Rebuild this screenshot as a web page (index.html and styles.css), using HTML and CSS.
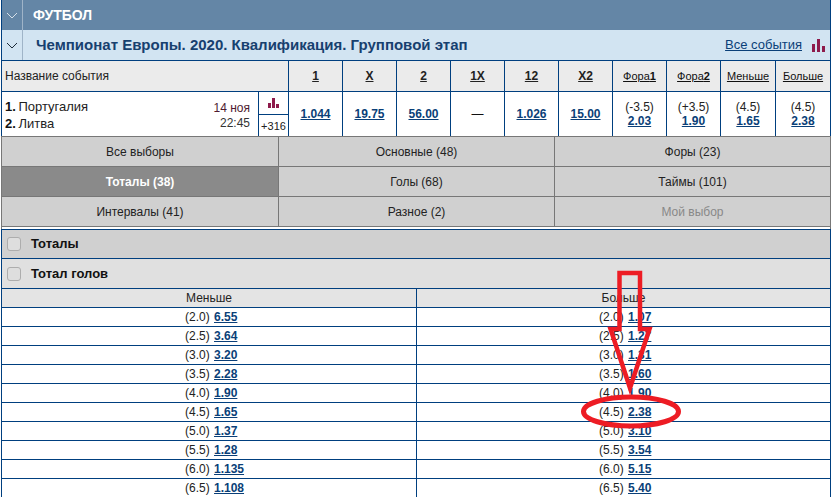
FILE: index.html
```html
<!DOCTYPE html>
<html lang="ru">
<head>
<meta charset="utf-8">
<title>Футбол</title>
<link rel="stylesheet" href="styles.css">
</head>
<body>
<div class="page">
  <div class="bar sport">
    <span class="toggle"><svg width="12" height="7" viewBox="0 0 12 7"><path d="M1 1l5 5 5-5" fill="none" stroke="#d5dfe8" stroke-width="1"/></svg></span>
    <span class="sport-name">ФУТБОЛ</span>
  </div>
  <div class="bar league">
    <span class="toggle"><svg width="12" height="7" viewBox="0 0 12 7"><path d="M1 1l5 5 5-5" fill="none" stroke="#1d2c3a" stroke-width="1"/></svg></span>
    <span class="league-name">Чемпионат Европы. 2020. Квалификация. Групповой этап</span>
    <a class="all-events" href="#">Все события</a>
    <svg class="league-chart" width="13" height="13" viewBox="0 0 13 13"><path d="M0 5h3v8H0zM5 0h3v13H5zM10 7h3v6h-3z" fill="#8e1a4b"/></svg>
  </div>

  <div class="odds-grid head">
    <div class="cell name-head">Название события</div>
    <div class="cell big"><u>1</u></div>
    <div class="cell big"><u>X</u></div>
    <div class="cell big"><u>2</u></div>
    <div class="cell big"><u>1X</u></div>
    <div class="cell big"><u>12</u></div>
    <div class="cell big"><u>X2</u></div>
    <div class="cell small"><u>Фора<b>1</b></u></div>
    <div class="cell small"><u>Фора<b>2</b></u></div>
    <div class="cell small"><u>Меньше</u></div>
    <div class="cell small last"><u>Больше</u></div>
  </div>

  <div class="odds-grid event">
    <div class="cell event-info">
      <div class="teams">
        <div><b>1.</b> Португалия</div>
        <div><b>2.</b> Литва</div>
      </div>
      <div class="when">
        <div class="date">14 ноя</div>
        <div>22:45</div>
      </div>
      <div class="extras">
        <span class="stat"><svg width="11" height="10" viewBox="0 0 11 10"><path d="M0 5h3v5H0zM4 0h3v10H4zM8 6h3v4H8z" fill="#8e1a4b"/></svg></span>
        <span class="more">+316</span>
      </div>
    </div>
    <div class="cell"><a href="#">1.044</a></div>
    <div class="cell"><a href="#">19.75</a></div>
    <div class="cell"><a href="#">56.00</a></div>
    <div class="cell dash">—</div>
    <div class="cell"><a href="#">1.026</a></div>
    <div class="cell"><a href="#">15.00</a></div>
    <div class="cell stack"><span>(-3.5)</span><a href="#">2.03</a></div>
    <div class="cell stack"><span>(+3.5)</span><a href="#">1.90</a></div>
    <div class="cell stack"><span>(4.5)</span><a href="#">1.65</a></div>
    <div class="cell stack last"><span>(4.5)</span><a href="#">2.38</a></div>
  </div>

  <div class="tabs">
    <div class="tab">Все выборы</div>
    <div class="tab">Основные (48)</div>
    <div class="tab">Форы (23)</div>
    <div class="tab active">Тоталы (38)</div>
    <div class="tab">Голы (68)</div>
    <div class="tab">Таймы (101)</div>
    <div class="tab">Интервалы (41)</div>
    <div class="tab">Разное (2)</div>
    <div class="tab disabled">Мой выбор</div>
  </div>

  <div class="group closed"><span class="check"></span>Тоталы</div>
  <div class="group open"><span class="check"></span>Тотал голов</div>

  <div class="totals">
    <div class="totals-head">Меньше</div>
    <div class="totals-head">Больше</div>
    <div class="line">(2.0) <a href="#">6.55</a></div><div class="line">(2.0) <a href="#">1.07</a></div>
    <div class="line">(2.5) <a href="#">3.64</a></div><div class="line">(2.5) <a href="#">1.27</a></div>
    <div class="line">(3.0) <a href="#">3.20</a></div><div class="line">(3.0) <a href="#">1.31</a></div>
    <div class="line">(3.5) <a href="#">2.28</a></div><div class="line">(3.5) <a href="#">1.60</a></div>
    <div class="line">(4.0) <a href="#">1.90</a></div><div class="line">(4.0) <a href="#">1.90</a></div>
    <div class="line">(4.5) <a href="#">1.65</a></div><div class="line">(4.5) <a href="#">2.38</a></div>
    <div class="line">(5.0) <a href="#">1.37</a></div><div class="line">(5.0) <a href="#">3.10</a></div>
    <div class="line">(5.5) <a href="#">1.28</a></div><div class="line">(5.5) <a href="#">3.54</a></div>
    <div class="line">(6.0) <a href="#">1.135</a></div><div class="line">(6.0) <a href="#">5.15</a></div>
    <div class="line">(6.5) <a href="#">1.108</a></div><div class="line">(6.5) <a href="#">5.40</a></div>
  </div>
</div>

<svg class="markup" width="832" height="497" viewBox="0 0 832 497">
  <path d="M619.5 273H640V329H649.5L630 388 610.5 329H619.5Z" fill="none" stroke="#ed1c24" stroke-width="4.5"/>
  <ellipse cx="631" cy="411.5" rx="47.5" ry="14.5" fill="none" stroke="#ed1c24" stroke-width="5"/>
</svg>
</body>
</html>
```
FILE: styles.css
```css
* { box-sizing: border-box; }
html, body { margin: 0; padding: 0; background: #fff; }
body {
  width: 832px;
  height: 497px;
  overflow: hidden;
  position: relative;
  font: 12px/14px "Liberation Sans", Arial, sans-serif;
  color: #222;
}
a { color: #0a3f78; }
.page {
  width: 830px;
  margin-left: 1px;
  border-left: 1px solid #003f7f;
  border-right: 1px solid #003f7f;
}
.bar { height: 30px; display: flex; align-items: center; }
.sport { background: #6486a6; }
.league { background: #d2e4f2; height: 31px; border-bottom: 1px solid #003f7f; }
.toggle {
  width: 21px;
  height: 100%;
  flex: none;
  display: flex;
  align-items: center;
  justify-content: center;
  border-right: 1px solid #9fb4c8;
}
.sport-name { margin-left: 10px; font-size: 14px; font-weight: bold; color: #fff; }
.league-name { margin-left: 13px; font-size: 15px; font-weight: bold; color: #17406f; }
.all-events { margin-left: auto; font-size: 13px; color: #0a3f78; }
.league-chart { margin: 0 5px 0 10px; flex: none; }

.odds-grid {
  display: grid;
  grid-template-columns: 287px repeat(8, 54px) 55px 54px;
}
.head { height: 31px; background: #ebebeb; border-bottom: 1px solid #003f7f; }
.event { height: 44px; }
.cell {
  display: flex;
  align-items: center;
  justify-content: center;
  border-right: 1px solid #003f7f;
  min-width: 0;
}
.cell.last { border-right: 0; }
.name-head { justify-content: flex-start; padding-left: 3px; }
.big { font-weight: bold; color: #222; }
.small { font-size: 11px; color: #111; }
.event .cell a { font-weight: bold; }
.dash { color: #111; }
.stack { flex-direction: column; }
.stack span { line-height: 14px; }
.stack a { line-height: 14px; }
.event-info { justify-content: flex-start; align-items: stretch; padding-left: 3px; }
.teams { flex: 1; padding-top: 6px; font-size: 13px; line-height: 17px; word-spacing: -1px; color: #222; }
.teams b { color: #111; }
.when { width: 60px; padding-top: 9px; text-align: right; margin-right: 8px; line-height: 15px; color: #333; }
.date { color: #4e1a30; }
.extras {
  width: 30px;
  flex: none;
  display: flex;
  flex-direction: column;
  border-left: 1px solid #003f7f;
}
.stat { height: 23px; display: flex; align-items: center; justify-content: center; border-bottom: 1px solid #003f7f; }
.more { flex: 1; display: flex; align-items: center; justify-content: center; font-size: 11px; color: #222; }

.tabs {
  display: grid;
  grid-template-columns: 277px 276px 1fr;
  grid-auto-rows: 30px;
  margin: 0 -1px;
  border-top: 1px solid #777;
  border-left: 1px solid #777;
  border-right: 1px solid #777;
  height: 93px;
  background: #fff;
}
.tab {
  display: flex;
  align-items: center;
  justify-content: center;
  background: #d0d0d0;
  border-right: 1px solid #777;
  border-bottom: 1px solid #777;
  color: #222;
}
.tab:nth-child(3n) { border-right: 0; }
.tab.active { background: #8a8a8a; color: #fff; font-weight: bold; }
.tab.disabled { color: #888; }

.group {
  display: flex;
  align-items: center;
  height: 29px;
  padding-left: 5px;
  border-top: 1px solid #003f7f;
  font-size: 13px;
  font-weight: bold;
  color: #111;
}
.closed { background: #d0d0d0; }
.open { background: #e0e0e0; height: 30px; }
.check {
  width: 14px;
  height: 14px;
  margin-right: 10px;
  flex: none;
  border: 1px solid #adadad;
  border-radius: 3px;
  background: #dedede;
}

.totals { display: grid; grid-template-columns: 415px 1fr; border-top: 1px solid #003f7f; }
.totals-head, .line {
  display: flex;
  align-items: center;
  height: 19px;
  border-bottom: 1px solid #003f7f;
}
.totals-head { justify-content: center; background: #e4e4e4; color: #222; height: 19px; }
.line { padding-left: 182px; white-space: pre; }
.totals > .line:nth-child(odd) { padding-left: 183px; }
.line a { font-weight: bold; margin-left: 1px; }
.totals > :nth-child(odd) { border-right: 1px solid #003f7f; }

.markup { position: absolute; left: 0; top: 0; pointer-events: none; }
```
